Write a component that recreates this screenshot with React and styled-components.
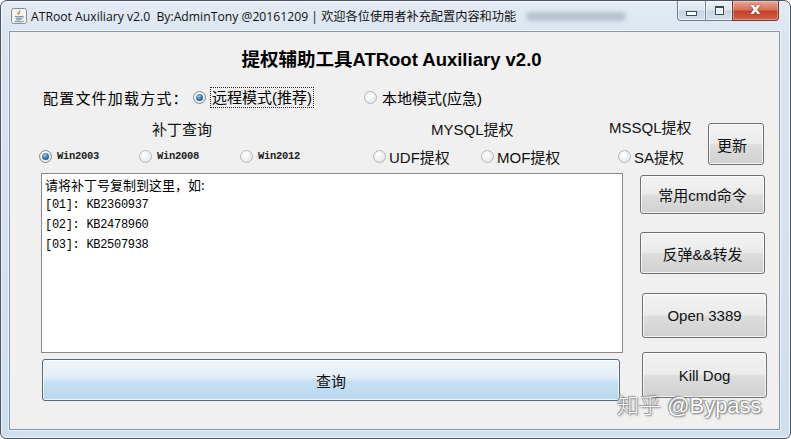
import React from 'react'
import styled, { createGlobalStyle, css } from 'styled-components'

const GlobalStyle = createGlobalStyle`
  html, body {
    margin: 0;
    padding: 0;
    background: #ffffff;
  }
`;

const JavaIcon = () => (
    <svg width="16" height="16" viewBox="0 0 16 16">
        <rect x="0.5" y="0.5" width="15" height="15" rx="2" fill="#f6f6f6" stroke="#8c8c8c" />
        <path d="M8.6 2.2c1.4 1.2-1.6 2.2-.4 3.8M7 4.4c-.8.8.6 1.4.2 2.2" stroke="#e76f00" strokeWidth="1.1" fill="none" />
        <path d="M4 8.3c1.8.6 6 .6 7.6 0M4.6 10c1.6.5 5 .5 6.4 0M5.2 11.7c1.4.4 4 .4 5.2 0" stroke="#5382a1" strokeWidth="1" fill="none" />
        <path d="M11.6 8.4c1.2-.2 1.4 1.2 0 1.6" stroke="#5382a1" strokeWidth="0.9" fill="none" />
        <path d="M3.4 13.3c2.6.7 7 .7 9.2 0" stroke="#5382a1" strokeWidth="0.9" fill="none" />
    </svg>
);

const Radio = ({ on }) => <RadioDot $on={on} />;

export default function App() {
    return (
        <>
            <GlobalStyle />
            <Window>
                <TitleBar>
                    <JavaIcon />
                    <TitleText>ATRoot Auxiliary v2.0&nbsp; By:AdminTony @20161209 | 欢迎各位使用者补充配置内容和功能</TitleText>
                    <Smudge />
                    <Caption>
                        <CapBtn $w={28}><MinGlyph /></CapBtn>
                        <CapBtn $w={27}><MaxGlyph /></CapBtn>
                        <CloseBtn>x</CloseBtn>
                    </Caption>
                </TitleBar>
                <Client>
                    <Heading>提权辅助工具ATRoot Auxiliary v2.0</Heading>
                    <ConfigRow>
                        <ConfigLabel>配置文件加载方式：</ConfigLabel>
                        <Option $w={171}>
                            <Radio on />
                            <FocusBox>远程模式(推荐)</FocusBox>
                        </Option>
                        <Option>
                            <Radio />
                            <OptionText>本地模式(应急)</OptionText>
                        </Option>
                    </ConfigRow>
                    <Section>
                        <LeftBlock>
                            <LabelsRow>
                                <GroupLabel $w={279}>补丁查询</GroupLabel>
                                <GroupLabel $w={178}>MYSQL提权</GroupLabel>
                                <GroupLabel $up>MSSQL提权</GroupLabel>
                            </LabelsRow>
                            <RadiosRow>
                                <RadioItem $w={100}><Radio on /><WinText>Win2003</WinText></RadioItem>
                                <RadioItem $w={101}><Radio /><WinText>Win2008</WinText></RadioItem>
                                <RadioItem $w={133}><Radio /><WinText>Win2012</WinText></RadioItem>
                                <RadioItem $w={108}><Radio /><ItemText>UDF提权</ItemText></RadioItem>
                                <RadioItem $w={137}><Radio /><ItemText>MOF提权</ItemText></RadioItem>
                                <RadioItem><Radio /><ItemText>SA提权</ItemText></RadioItem>
                            </RadiosRow>
                        </LeftBlock>
                        <UpdateButton>更新</UpdateButton>
                    </Section>
                    <Main>
                        <LeftCol>
                            <TextBox>
                                <Line $cjk>请将补丁号复制到这里，如:</Line>
                                <Line>[01]: KB2360937</Line>
                                <Line>[02]: KB2478960</Line>
                                <Line>[03]: KB2507938</Line>
                            </TextBox>
                            <QueryButton>查询</QueryButton>
                        </LeftCol>
                        <RightCol>
                            <SideButton $h={39}>常用cmd命令</SideButton>
                            <SideButton $h={42} $top={18}>反弹&amp;&amp;转发</SideButton>
                            <SideButton $h={45} $top={19} $shift={2}>Open 3389</SideButton>
                            <SideButton $h={46} $top={14} $shift={2}>Kill Dog</SideButton>
                        </RightCol>
                    </Main>
                </Client>
                <Watermark><span>知乎</span> @Bypass</Watermark>
            </Window>
        </>
    );
}

const Window = styled.div`
    position: relative;
    box-sizing: border-box;
    width: 791px;
    height: 439px;
    display: flex;
    flex-direction: column;
    padding: 0 10px 8px 8px;
    border: 1px solid #4d5663;
    border-radius: 7px 7px 6px 6px;
    background: linear-gradient(180deg, #e4ebf3 0%, #d9e4ef 10%, #cfdeee 100%);
    box-shadow: inset 0 0 0 1px rgba(255, 255, 255, 0.6);
    overflow: hidden;
    font-family: "Liberation Sans", "Noto Sans CJK SC", sans-serif;
    color: #000;
`;

const TitleBar = styled.div`
    height: 30px;
    display: flex;
    align-items: center;
    padding-left: 2px;
`;

const TitleText = styled.span`
    margin-left: 4px;
    font-family: "Open Sans", "Noto Sans CJK SC", sans-serif;
    font-size: 12.2px;
    color: #111;
    white-space: nowrap;
`;

const Smudge = styled.span`
    display: inline-block;
    width: 100px;
    height: 9px;
    margin-left: 10px;
    border-radius: 5px;
    background: #b9c1cc;
    filter: blur(2px);
`;

const Caption = styled.div`
    align-self: flex-start;
    display: flex;
    margin-left: auto;
    margin-right: 1px;
    height: 20px;
`;

const CapBtn = styled.div`
    width: ${p => p.$w}px;
    box-sizing: border-box;
    display: flex;
    align-items: center;
    justify-content: center;
    border: 1px solid #6e7f93;
    border-top: none;
    border-right: none;
    background: linear-gradient(180deg, #eef2f7 0%, #dde5ee 45%, #c7d3e0 55%, #d5dfea 100%);
    box-shadow: inset 0 0 0 1px rgba(255, 255, 255, 0.6);
    &:first-child {
        border-bottom-left-radius: 4px;
    }
`;

const MinGlyph = styled.span`
    width: 9px;
    height: 3px;
    margin-top: 5px;
    border: 1px solid #3b4a5c;
    background: #fff;
`;

const MaxGlyph = styled.span`
    width: 7px;
    height: 6px;
    border: 1px solid #3b4a5c;
    border-top-width: 2px;
    background: #e8eef5;
    box-shadow: inset 0 0 0 1px #fff;
`;

const CloseBtn = styled.div`
    width: 47px;
    box-sizing: border-box;
    display: flex;
    align-items: center;
    justify-content: center;
    border: 1px solid #6b3a32;
    border-top: none;
    border-bottom-right-radius: 4px;
    background: linear-gradient(180deg, #e8a594 0%, #d8735c 45%, #c4412a 55%, #d26048 100%);
    box-shadow: inset 0 0 0 1px rgba(255, 255, 255, 0.35);
    color: #fff;
    font-family: "DejaVu Sans", sans-serif;
    font-weight: 700;
    font-size: 16px;
    line-height: 1;
    padding-bottom: 3px;
    text-shadow: 0 0 2px #7a2010;
`;

const Client = styled.div`
    flex: 1;
    display: flex;
    flex-direction: column;
    border: 1px solid #8497ad;
    background: #f0f0f0;
    box-shadow: 0 0 0 1px rgba(255, 255, 255, 0.55);
`;

const Heading = styled.div`
    margin-top: 17px;
    height: 22px;
    line-height: 22px;
    padding-right: 6px;
    text-align: center;
    font-size: 18.5px;
    font-weight: 700;
`;

const ConfigRow = styled.div`
    margin-top: 15px;
    height: 22px;
    display: flex;
    align-items: center;
    padding-left: 33px;
    font-size: 15px;
`;

const ConfigLabel = styled.span`
    width: 150px;
    letter-spacing: 1.2px;
    white-space: nowrap;
`;

const Option = styled.label`
    display: flex;
    align-items: center;
    ${p => p.$w && css`width: ${p.$w}px;`}
`;

const RadioDot = styled.span`
    position: relative;
    box-sizing: border-box;
    flex: none;
    width: 13px;
    height: 13px;
    border-radius: 50%;
    border: 1px solid ${p => (p.$on ? '#7f8a94' : '#b4b8bc')};
    background: radial-gradient(circle at 40% 35%, #ffffff 0%, #eceeef 55%, #d6d9dc 100%);
    ${p => p.$on && css`
        &::after {
            content: '';
            position: absolute;
            left: 2px;
            top: 2px;
            width: 7px;
            height: 7px;
            border-radius: 50%;
            background: radial-gradient(circle at 40% 35%, #9fd0ef 0%, #3a7fb0 45%, #1a3d58 100%);
        }
    `}
`;

const FocusBox = styled.span`
    margin-left: 4px;
    padding: 0 1px;
    line-height: 19px;
    border: 1px dotted #222;
`;

const OptionText = styled.span`
    margin-left: 5px;
`;

const Section = styled.div`
    margin-top: 10px;
    display: flex;
`;

const LeftBlock = styled.div`
    width: 698px;
    display: flex;
    flex-direction: column;
`;

const LabelsRow = styled.div`
    height: 20px;
    display: flex;
    align-items: center;
    padding-left: 142px;
    font-size: 15px;
    color: #111;
`;

const GroupLabel = styled.span`
    white-space: nowrap;
    ${p => p.$w && css`width: ${p.$w}px;`}
    ${p => p.$up && css`margin-top: -4px;`}
`;

const RadiosRow = styled.div`
    margin-top: 9px;
    height: 18px;
    display: flex;
    align-items: center;
    padding-left: 29px;
`;

const RadioItem = styled.label`
    display: flex;
    align-items: center;
    ${p => p.$w && css`width: ${p.$w}px;`}
`;

const WinText = styled.span`
    margin-left: 5px;
    font-family: "Liberation Mono", monospace;
    font-size: 10.5px;
    font-weight: 700;
    letter-spacing: -0.3px;
    color: #222;
`;

const ItemText = styled.span`
    margin-left: 3px;
    font-size: 15px;
    color: #111;
`;

const Button = styled.button`
    box-sizing: border-box;
    padding: 0;
    border: 1px solid #707070;
    border-radius: 3px;
    background: linear-gradient(180deg, #f3f3f3 0%, #ebebeb 48%, #dddddd 52%, #d0d0d0 100%);
    box-shadow: inset 0 0 0 1px rgba(255, 255, 255, 0.75);
    font-family: "Liberation Sans", "Noto Sans CJK SC", sans-serif;
    font-size: 15px;
    font-weight: 400;
    color: #111;
    white-space: nowrap;
`;

const UpdateButton = styled(Button)`
    align-self: flex-start;
    margin-top: 5px;
    width: 56px;
    height: 42px;
    padding-right: 8px;
`;

const Main = styled.div`
    margin-top: 8px;
    display: flex;
    padding-left: 31px;
`;

const LeftCol = styled.div`
    width: 582px;
    display: flex;
    flex-direction: column;
`;

const TextBox = styled.div`
    box-sizing: border-box;
    height: 180px;
    padding: 1px 3px;
    border: 1px solid #8a8a8a;
    background: #fff;
`;

const Line = styled.div`
    height: 20px;
    line-height: 20px;
    white-space: nowrap;
    ${p => (p.$cjk
        ? css`font-family: "Noto Sans CJK SC", sans-serif; font-size: 13px;`
        : css`font-family: "Liberation Mono", monospace; font-size: 12px; letter-spacing: -0.3px;`)}
`;

const QueryButton = styled(Button)`
    margin-top: 6px;
    margin-left: 1px;
    width: 578px;
    height: 42px;
    border-color: #56687a;
    background: linear-gradient(180deg, #eff5fa 0%, #e4eef7 42%, #c7e0f2 55%, #b7d6ee 100%);
`;

const RightCol = styled.div`
    margin-left: 17px;
    padding-top: 2px;
    display: flex;
    flex-direction: column;
`;

const SideButton = styled(Button)`
    width: 125px;
    height: ${p => p.$h}px;
    margin-top: ${p => p.$top || 0}px;
    margin-left: ${p => p.$shift || 0}px;
`;

const Watermark = styled.div`
    position: absolute;
    left: 616px;
    top: 386px;
    font-family: "Liberation Sans", "Noto Sans CJK SC", sans-serif;
    font-size: 22px;
    color: #fff;
    white-space: nowrap;
    text-shadow: 0 0 1px #555, 1px 1px 2px #777, -1px -1px 1px #999;
    span {
        font-family: "Noto Sans CJK SC", sans-serif;
        font-weight: 300;
    }
`;
